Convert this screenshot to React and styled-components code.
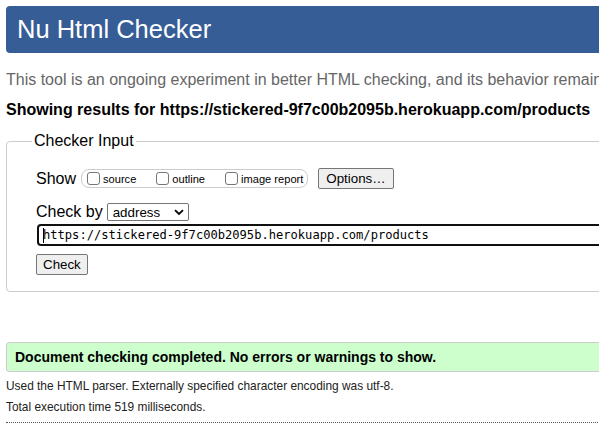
import React from 'react';
import styled, { createGlobalStyle } from 'styled-components';

const GlobalStyle = createGlobalStyle`
  html, body {
    margin: 0;
    padding: 0;
    background: #fff;
    overflow: hidden;
  }
  body {
    font-family: "Liberation Sans", Arial, sans-serif;
    color: #000;
  }
`;

const Page = styled.div`
  width: 1100px;
  padding: 6px 6px 0 6px;
  box-sizing: border-box;
`;

const Header = styled.h1`
  margin: 0;
  height: 47px;
  padding-left: 11px;
  background: #365d95;
  border-radius: 4px;
  color: #fff;
  font-size: 25.5px;
  font-weight: normal;
  line-height: 46px;
`;

const Intro = styled.p`
  margin: 18px 0 0;
  font-size: 16px;
  line-height: 18px;
  color: #666;
  white-space: nowrap;
`;

const ResultsFor = styled.p`
  margin: 12px 0 0;
  font-size: 16px;
  line-height: 18px;
  font-weight: bold;
  white-space: nowrap;
`;

const InputFieldset = styled.fieldset`
  margin: 13px 0 0;
  padding: 0 29px 16px;
  border: 1px solid #ccc;
  border-radius: 4px;
  min-width: 0;
`;

const Legend = styled.legend`
  margin-left: -4px;
  padding: 0 2px;
  font-size: 16px;
  line-height: 18px;
`;

const Row = styled.div`
  display: flex;
  align-items: center;
  height: ${p => p.$h}px;
  margin-top: ${p => p.$top}px;
  font-size: 16px;
`;

const Label = styled.span`
  margin-right: ${p => p.$mr ?? 5}px;
`;

const ShowGroup = styled.div`
  display: flex;
  align-items: center;
  height: 17px;
  padding: 0 4px 0 1px;
  border: 1px solid #ccc;
  border-radius: 8px;
  font-size: 11.1px;
`;

const CheckLabel = styled.label`
  display: flex;
  align-items: center;
  margin-right: ${p => (p.$last ? 0 : 16)}px;
`;

const Box = styled.input`
  appearance: none;
  width: 13px;
  height: 13px;
  margin: 0 3px 0 4px;
  border: 1px solid #767676;
  border-radius: 3px;
  background: #fff;
  box-sizing: border-box;
`;

const Button = styled.button`
  height: ${p => p.$h}px;
  margin-left: ${p => p.$ml || 0}px;
  padding: 0 ${p => p.$px}px;
  border: 1px solid #767676;
  border-radius: 2px;
  background: #efefef;
  font-family: "Liberation Sans", Arial, sans-serif;
  font-size: 13.333px;
  color: #000;
`;

const Select = styled.div`
  display: flex;
  align-items: center;
  justify-content: space-between;
  width: 82px;
  height: 18px;
  margin-left: 1px;
  padding: 0 4px 0 5px;
  box-sizing: border-box;
  border: 1px solid #767676;
  border-radius: 2px;
  font-size: 13.333px;
  background: #fff;
`;

const UrlInput = styled.div`
  flex: 1;
  height: 22px;
  margin-left: 1px;
  padding-left: 4px;
  box-sizing: border-box;
  border: 2px solid #101010;
  border-radius: 4px;
  display: flex;
  align-items: center;
  font-family: "DejaVu Sans Mono", "Liberation Mono", monospace;
  font-size: 12.1px;
  white-space: nowrap;
`;

const Caret = styled.span`
  display: inline-block;
  width: 1px;
  height: 15px;
  background: #000;
  margin-right: -1px;
`;

const Success = styled.p`
  margin: 50px 0 0;
  height: 30px;
  padding-left: 8px;
  box-sizing: border-box;
  border: 1px solid #ccc;
  border-radius: 3px;
  background: #ccffcc;
  font-size: 14px;
  font-weight: bold;
  line-height: 28px;
  white-space: nowrap;
`;

const Detail = styled.p`
  margin: ${p => p.$top}px 0 0;
  font-size: 11.9px;
  line-height: 14px;
  color: #222;
  white-space: nowrap;
`;

const Divider = styled.hr`
  margin: 8px 0 0;
  height: 0;
  border: 0;
  border-top: 1px dotted #555;
`;

const Chevron = () => (
  <svg width="10" height="7" viewBox="0 0 10 7">
    <path d="M1 1.2 L5 5 L9 1.2" fill="none" stroke="#000" strokeWidth="1.8" />
  </svg>
);

export default function App() {
  return (
    <>
      <GlobalStyle />
      <Page>
        <Header>Nu Html Checker</Header>
        <Intro>
          This tool is an ongoing experiment in better HTML checking, and its behavior remains subject to change
        </Intro>
        <ResultsFor>Showing results for https://stickered-9f7c00b2095b.herokuapp.com/products</ResultsFor>

        <InputFieldset>
          <Legend>Checker Input</Legend>
          <Row $h={21} $top={18}>
            <Label>Show</Label>
            <ShowGroup>
              <CheckLabel><Box type="checkbox" />source</CheckLabel>
              <CheckLabel><Box type="checkbox" />outline</CheckLabel>
              <CheckLabel $last><Box type="checkbox" />image report</CheckLabel>
            </ShowGroup>
            <Button $h={21} $px={7} $ml={10}>Options…</Button>
          </Row>
          <Row $h={18} $top={14}>
            <Label $mr={3}>Check by</Label>
            <Select>
              <span>address</span>
              <Chevron />
            </Select>
          </Row>
          <Row $h={22} $top={3}>
            <UrlInput>
              <Caret />
              https://stickered-9f7c00b2095b.herokuapp.com/products
            </UrlInput>
          </Row>
          <Row $h={21} $top={8}>
            <Button $h={21} $px={6}>Check</Button>
          </Row>
        </InputFieldset>

        <Success>Document checking completed. No errors or warnings to show.</Success>
        <Detail $top={7}>Used the HTML parser. Externally specified character encoding was utf-8.</Detail>
        <Detail $top={7}>Total execution time 519 milliseconds.</Detail>
        <Divider />
      </Page>
    </>
  );
}
